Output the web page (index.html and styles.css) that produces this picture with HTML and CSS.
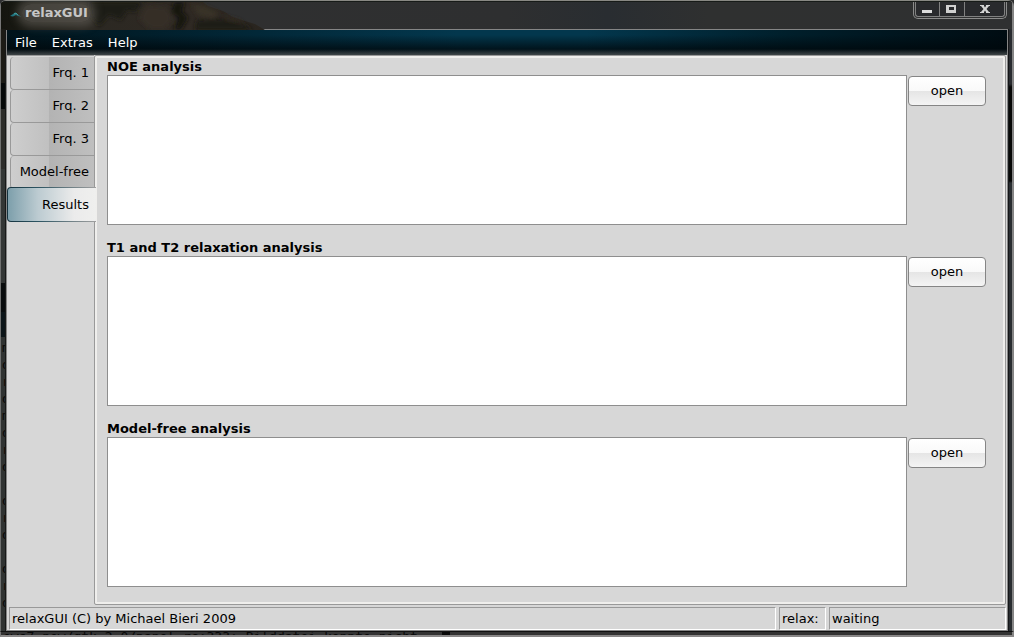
FILE: index.html
```html
<!DOCTYPE html>
<html lang="en">
<head>
<meta charset="utf-8">
<title>relaxGUI</title>
<link rel="stylesheet" href="styles.css">
</head>
<body>
<div class="window">
  <header class="titlebar">
    <svg class="landscape" width="340" height="28" viewBox="0 0 340 28" aria-hidden="true">
      <defs>
        <linearGradient id="rock" x1="0" x2="1" y1="0" y2="0">
          <stop offset="0" stop-color="#14150f"/>
          <stop offset=".35" stop-color="#2b2822"/>
          <stop offset=".7" stop-color="#2f2923"/>
          <stop offset="1" stop-color="#29251f"/>
        </linearGradient>
        <filter id="soft"><feGaussianBlur stdDeviation="2"/></filter>
      </defs>
      <path fill="url(#rock)" d="M0 0H202L207 4L222 9L232 15L244 19L254 22L264 28H0Z"/>
      <g filter="url(#soft)">
        <path fill="#1d1c18" d="M88 0H142L134 10L126 8L120 18L108 13L98 24L90 14Z"/>
        <path fill="#151411" d="M173 0H184L181 9L187 16L180 28H173L177 16L170 10Z"/>
        <path fill="#342e28" d="M145 3L166 5L172 17L164 27H149L138 17Z"/>
        <path fill="#373028" d="M190 2L204 4L218 11L212 17L198 14Z"/>
        <path fill="#1d1a15" d="M196 18L222 17L244 23L252 28H194Z"/>
        <path fill="#302a22" d="M220 13L238 18L243 22L224 18Z"/>
      </g>
    </svg>
    <svg class="app-icon" width="12" height="8" viewBox="0 0 12 8" aria-hidden="true">
      <path d="M0 5L3 3L5 1.500L7 3L11 5.500L8 5L6 4L3 5.500Z" fill="#1c7480"/>
      <path d="M4 3L6 2L8 4" fill="none" stroke="#37a7a8" stroke-width="1"/>
    </svg>
    <h1 class="title">relaxGUI</h1>
    <div class="window-controls">
      <button class="control control-minimize" type="button" aria-label="Minimize">
        <svg width="12" height="12" viewBox="0 0 12 12"><path d="M0 8H10V11H0Z" fill="#dcdcdc"/></svg>
      </button>
      <button class="control" type="button" aria-label="Maximize">
        <svg width="12" height="12" viewBox="0 0 12 12"><path d="M0 3H10V11H0ZM3 5V8H8V5Z" fill="#d0d0d0" fill-rule="evenodd"/></svg>
      </button>
      <button class="control control-close" type="button" aria-label="Close">
        <svg width="12" height="12" viewBox="0 0 12 12"><path d="M1 3H5V4L6 5.500L7 4V3H11V4H10L7.500 7L10 10H11V11H7V10L6 8.500L5 10V11H1V10H2L4.500 7L2 4H1Z" fill="#d4d4d4"/></svg>
      </button>
    </div>
  </header>

  <div class="frame">
    <div class="edge edge-left" aria-hidden="true">
      <div class="terminal-column">m<br>d<br>r<br>d<br>m<br>d<br>r<br>d<br><br>d<br>r<br>d<br><br>d<br>r<br>d</div>
    </div>
    <main class="client">
      <nav class="menubar" aria-label="Main menu">
        <button class="menu" type="button">File</button>
        <button class="menu" type="button">Extras</button>
        <button class="menu" type="button">Help</button>
      </nav>

      <div class="notebook">
        <div class="tabs" role="tablist" aria-orientation="vertical">
          <button class="tab" role="tab" type="button">Frq. 1</button>
          <button class="tab" role="tab" type="button">Frq. 2</button>
          <button class="tab" role="tab" type="button">Frq. 3</button>
          <button class="tab" role="tab" type="button">Model-free</button>
          <button class="tab tab-active" role="tab" type="button" aria-selected="true">Results</button>
        </div>
        <div class="page" role="tabpanel">
          <section class="result">
            <label class="result-label" for="noe">NOE analysis</label>
            <div class="result-row">
              <textarea class="result-box" id="noe"></textarea>
              <button class="open" type="button">open</button>
            </div>
          </section>
          <section class="result">
            <label class="result-label" for="relaxation">T1 and T2 relaxation analysis</label>
            <div class="result-row">
              <textarea class="result-box" id="relaxation"></textarea>
              <button class="open" type="button">open</button>
            </div>
          </section>
          <section class="result">
            <label class="result-label" for="modelfree">Model-free analysis</label>
            <div class="result-row">
              <textarea class="result-box" id="modelfree"></textarea>
              <button class="open" type="button">open</button>
            </div>
          </section>
        </div>
      </div>

      <footer class="statusbar">
        <div class="status status-main">relaxGUI (C) by Michael Bieri 2009</div>
        <div class="status status-name">relax:</div>
        <div class="status status-value">waiting</div>
      </footer>
    </main>
    <div class="edge edge-right" aria-hidden="true"></div>
  </div>
  <div class="bottom-edge" aria-hidden="true"><span class="terminal-line">ews7_new/gtk-2.0/panel.rc:333: Bilddatei konnte nicht</span><span class="cursor"></span></div>
</div>
</body>
</html>
```

FILE: styles.css
```css
* {
  box-sizing: border-box;
}

body {
  margin: 0;
  background: #2e2f30;
  color: #000;
  font: 13px/18px "DejaVu Sans", sans-serif;
}

button {
  margin: 0;
  font: inherit;
  color: inherit;
}

.window {
  display: flex;
  flex-direction: column;
  min-height: 100vh;
  border-top: 1px solid #888883;
  border-radius: 6px 6px 0 0;
  overflow: hidden;
}

/* Title bar */
.titlebar {
  position: relative;
  display: flex;
  align-items: flex-start;
  height: 28px;
  padding-left: 9px;
  padding-right: 5px;
  border-top: 1px solid #171b18;
  border-left: 1px solid #777;
  border-right: 2px solid #858585;
  background: linear-gradient(90deg, #303030, #2e2f30 50%, #292d31 60%, #2f3030 70%, #2f3031);
}

.landscape {
  position: absolute;
  left: 0;
  top: 0;
}

.app-icon {
  position: relative;
  margin-top: 9px;
}

.title {
  position: relative;
  margin: 2px 0 0;
  padding: 0 3px;
  font-size: 13px;
  line-height: 18px;
  color: #c6c6c6;
  border-radius: 12px;
  background: rgba(120, 116, 108, 0.45);
  box-shadow: 0 0 8px 5px rgba(120, 116, 108, 0.45);
}

.window-controls {
  display: flex;
  margin-left: auto;
  height: 17px;
  border: 1px solid #8b8b8b;
  border-top: 0;
  border-radius: 0 0 5px 5px;
  padding: 0 1px 1px;
}

.control {
  display: flex;
  justify-content: center;
  width: 25px;
  padding: 0;
  border: 1px solid #808080;
  border-width: 0 0 1px 1px;
  background: #292a2d;
}

.control-minimize {
  width: 24px;
  border-bottom-left-radius: 3px;
}

.control-close {
  width: 41px;
  border-right-width: 1px;
  border-bottom-right-radius: 3px;
}

/* Window frame */
.frame {
  display: flex;
  flex: 1;
}

.edge {
  position: relative;
  flex: none;
  width: 6px;
  overflow: hidden;
}

.edge-left {
  border-left: 1px solid #6f706f;
  border-right: 1px solid #171918;
  background: linear-gradient(#1c1b16 0 54px, #060909 54px 80px, #2c2c2a 80px 140px, #333635 140px 254px, #090c0d 254px 283px, #0c1519 283px 308px, #303332 308px);
}

.terminal-column {
  position: absolute;
  left: 1px;
  top: 310px;
  font: 13px/17px "DejaVu Sans Mono", monospace;
  color: #080808;
}

.edge-right {
  border-left: 1px solid #151719;
  border-right: 2px solid #858585;
  background: linear-gradient(#292c30 0 55px, #070807 58px 152px, #292d31 154px);
}

.client {
  display: flex;
  flex: 1;
  flex-direction: column;
  min-width: 0;
  border: 1px solid #858585;
  background: #d7d7d7;
}

/* Menu */
.menubar {
  display: flex;
  gap: 1px;
  height: 25px;
  padding-left: 1px;
  background:
    linear-gradient(transparent 19px, rgba(70, 76, 78, 0.9)),
    linear-gradient(rgba(0, 0, 0, 0) 20%, rgba(0, 8, 12, 0.8) 80%),
    linear-gradient(90deg, #00131b, #022838 25%, #03374d 45%, #03374d 58%, #001f2b 78%, #000c12);
}

.menu {
  padding: 1px 7px 0;
  border: 0;
  background: none;
  color: #fff;
}

/* Notebook */
.notebook {
  display: flex;
  flex: 1;
}

.tabs {
  display: flex;
  flex: none;
  flex-direction: column;
  width: 87px;
  padding-top: 1px;
  border-top: 1px solid #999;
}

.tab {
  height: 33px;
  margin-left: 3px;
  padding: 0 5px 0 0;
  border: 1px solid #999;
  border-width: 0 0 1px 1px;
  border-radius: 4px 0 0 4px;
  background: linear-gradient(90deg, #cecece, #c0c0c0 38px, #b3b3b3 38px, #bfbfbf);
  text-align: right;
}

.tab-active {
  position: relative;
  height: 35px;
  margin: -2px -2px 0 0;
  padding-right: 7px;
  border: 1px solid transparent;
  border-right: 0;
  background:
    linear-gradient(90deg, #7d9fab, #bccbd1 30px, #ebebeb 66px, #efefee) padding-box,
    linear-gradient(90deg, #14323e, #2b5361 30px, #a0a0a0) border-box;
}

.page {
  display: flex;
  flex: 1;
  flex-direction: column;
  gap: 12px;
  min-width: 0;
  margin: 0 1px 2px 0;
  padding: 0 19px 15px 11px;
  border: 1px solid #999;
  border-radius: 2px;
  box-shadow: inset 0 0 0 2px #efeeec;
}

.result {
  display: flex;
  flex-direction: column;
}

.result-label {
  height: 19px;
  padding-left: 1px;
  line-height: 22px;
  font-weight: bold;
}

.result-row {
  display: flex;
  align-items: flex-start;
  gap: 1px;
  padding-left: 1px;
}

.result-box {
  flex: 1;
  min-width: 0;
  height: 150px;
  margin: 0;
  padding: 4px;
  border: 1px solid #8e8e8e;
  border-radius: 0;
  background: #fff;
  font: inherit;
  resize: none;
}

.open {
  width: 78px;
  height: 30px;
  margin-top: 1px;
  padding: 0 0 1px;
  border: 1px solid #858585;
  border-radius: 4px;
  background: linear-gradient(#fff, #f9f9f9 50%, #e5e5e5 50%, #f4f4f4);
}

/* Status bar */
.statusbar {
  display: flex;
  gap: 3px;
  padding: 0 1px 0 2px;
}

.status {
  height: 23px;
  padding-left: 2px;
  border: 1px solid #999;
  border-right-color: #fff;
  border-bottom-color: #fff;
  line-height: 21px;
}

.status-main {
  flex: 1;
}

.status-name {
  width: 47px;
}

.status-value {
  width: 177px;
}

/* Lower frame */
.bottom-edge {
  display: flex;
  height: 6px;
  overflow: hidden;
  border-top: 1px solid #111;
  border-bottom: 2px solid #8a8888;
  border-left: 1px solid #777;
  border-right: 2px solid #858585;
  background: #333;
}

.terminal-line {
  padding-left: 2px;
  font: 13px/10px "DejaVu Sans Mono", monospace;
  white-space: nowrap;
  color: #080808;
}

.cursor {
  width: 8px;
  margin-left: 24px;
  background: #080808;
}
```
